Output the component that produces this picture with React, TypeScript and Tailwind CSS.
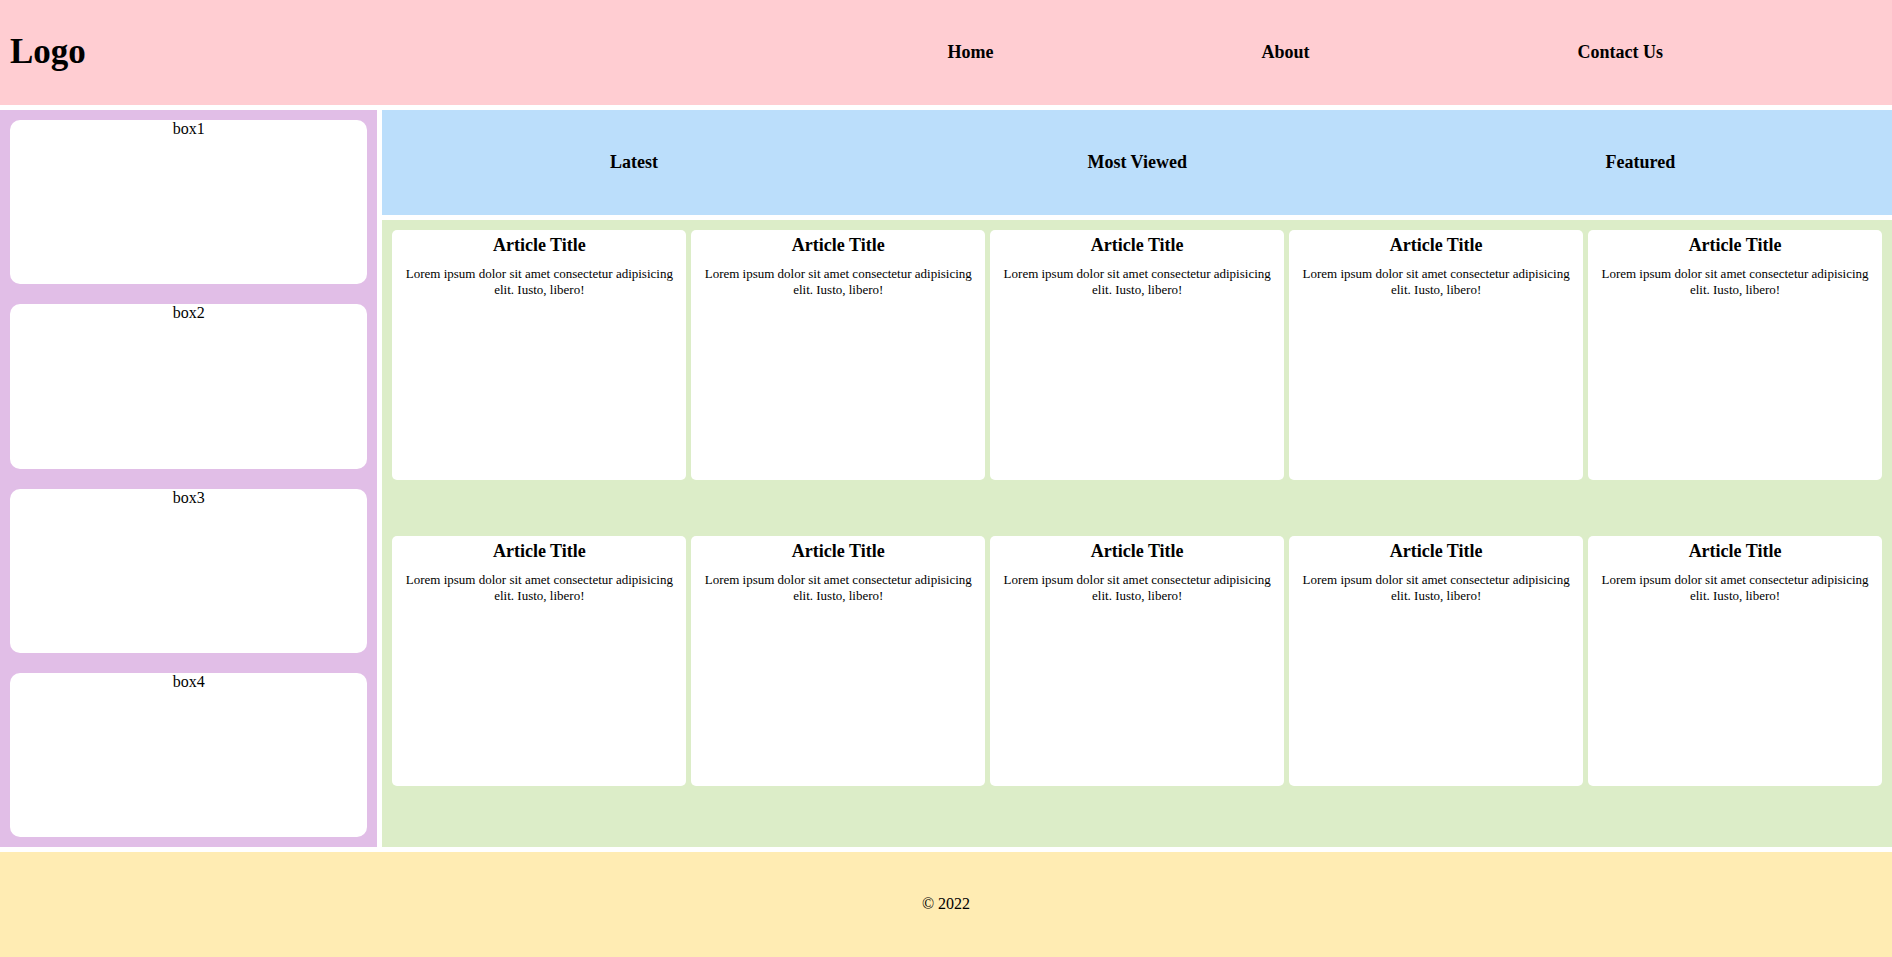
import React from "react";

const navLinks = ["Home", "About", "Contact Us"];
const tabs = ["Latest", "Most Viewed", "Featured"];
const boxes = ["box1", "box2", "box3", "box4"];
const articles = Array.from({ length: 10 }, (_, i) => i);

const ArticleCard = () => (
  <div className="h-[250px] rounded-[5px] bg-white pt-[5px] text-center">
    <h3 className="text-[18px] font-bold leading-[normal]">Article Title</h3>
    <p className="mt-[10px] px-[10px] text-[13px] leading-[16px]">
      Lorem ipsum dolor sit amet consectetur adipisicing elit. Iusto, libero!
    </p>
  </div>
);

const App = () => {
  return (
    <div
      className="grid h-screen grid-rows-[1fr_7fr_1fr] gap-[5px] bg-white text-black leading-[normal]"
      style={{ fontFamily: '"Liberation Serif", "Times New Roman", serif' }}
    >
      {/* Header */}
      <header className="flex items-center bg-[#ffcdd2] px-[10px]">
        <h1 className="-mt-[2px] text-[35px] font-bold">Logo</h1>
        <nav className="ml-auto mr-[219px]">
          <ul className="flex gap-[268px]">
            {navLinks.map((item) => (
              <li key={item} className="text-[18px] font-bold">
                {item}
              </li>
            ))}
          </ul>
        </nav>
      </header>

      {/* Body */}
      <main className="grid min-h-0 grid-cols-[1fr_4fr] gap-[5px]">
        <aside className="flex flex-col gap-5 bg-[#e1bee7] p-[10px]">
          {boxes.map((box) => (
            <div key={box} className="flex-1 rounded-[10px] bg-white text-center">
              {box}
            </div>
          ))}
        </aside>

        <section className="grid min-h-0 grid-rows-[1fr_6fr] gap-[5px]">
          <div className="grid grid-cols-3 items-center bg-[#bbdefb]">
            {tabs.map((tab) => (
              <div key={tab} className="text-center text-[18px] font-bold">
                {tab}
              </div>
            ))}
          </div>
          <div className="grid grid-cols-5 grid-rows-2 gap-[5px] bg-[#dcedc8] p-[10px]">
            {articles.map((a) => (
              <ArticleCard key={a} />
            ))}
          </div>
        </section>
      </main>

      {/* Footer */}
      <footer className="flex items-center justify-center bg-[#ffecb3]">
        <p>&copy; 2022</p>
      </footer>
    </div>
  );
};

export default App;
